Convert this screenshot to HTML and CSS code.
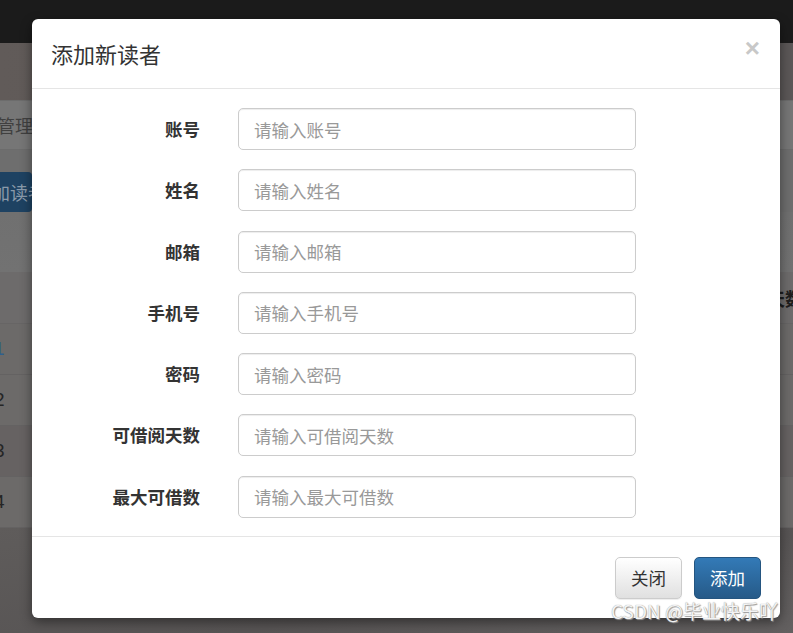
FILE: index.html
```html
<!DOCTYPE html>
<html lang="zh">
<head>
<meta charset="utf-8">
<title>添加新读者</title>
<link rel="stylesheet" href="styles.css">
</head>
<body>
<div class="page">
  <div class="topbar"></div>
  <div class="band band-dark"></div>
  <div class="band band-nav"><span class="nav-text">管理</span></div>
  <div class="band band-gap"></div>
  <div class="band band-btn"><span class="blue-btn">加读者</span></div>
  <div class="band band-light"></div>
  <div class="band band-head"><span class="head-right">天数</span></div>
  <div class="trow"><span class="num link">1</span></div>
  <div class="trow"><span class="num">2</span></div>
  <div class="trow trow-dark"><span class="num">3</span></div>
  <div class="trow"><span class="num">4</span></div>
  <div class="band band-bottom"></div>
</div>

<div class="modal">
  <div class="modal-header">
    <h4 class="modal-title">添加新读者</h4>
    <span class="close">&times;</span>
  </div>
  <form class="modal-body">
    <label class="form-label">账号</label><input class="form-input" placeholder="请输入账号">
    <label class="form-label">姓名</label><input class="form-input" placeholder="请输入姓名">
    <label class="form-label">邮箱</label><input class="form-input" placeholder="请输入邮箱">
    <label class="form-label">手机号</label><input class="form-input" placeholder="请输入手机号">
    <label class="form-label">密码</label><input class="form-input" placeholder="请输入密码">
    <label class="form-label">可借阅天数</label><input class="form-input" placeholder="请输入可借阅天数">
    <label class="form-label">最大可借数</label><input class="form-input" placeholder="请输入最大可借数">
  </form>
  <div class="modal-footer">
    <button class="btn btn-default" type="button">关闭</button>
    <button class="btn btn-primary" type="button">添加</button>
  </div>
</div>

<div class="watermark">CSDN @毕业快乐吖</div>
</body>
</html>
```

FILE: styles.css
```css
html, body {
  margin: 0;
  padding: 0;
  width: 793px;
  height: 633px;
  overflow: hidden;
  font-family: "Noto Sans CJK SC", "Liberation Sans", sans-serif;
  background: #5e5b5a;
}

.page {
  display: flex;
  flex-direction: column;
  width: 793px;
  height: 633px;
}

.topbar { height: 43px; background: #1b1b1b; flex: none; }
.band { flex: none; display: flex; align-items: center; }
.band-dark { height: 57px; background: linear-gradient(90deg, #615b59, #5a5655 60%, #5b5757); }
.band-nav { height: 50px; background: #767676; border-top: 1px solid #6c6c6c; border-bottom: 1px solid #6c6c6c; box-sizing: border-box; }
.nav-text { margin-left: -3px; font-size: 18px; color: #404040; line-height: 1; }
.band-gap { height: 22px; background: #6e6e6e; }
.band-btn { height: 40px; background: #6e6e6e; }
.blue-btn {
  display: flex; align-items: center;
  height: 40px; width: 40px; margin-left: -8px;
  background: #1e4262; color: #8a9aaa; font-size: 18px; white-space: nowrap; overflow: hidden;
  border-radius: 4px;
}
.band-light { height: 60px; background: linear-gradient(180deg, #707070, #727272); }
.band-head { height: 52px; background: #6d6b6b; justify-content: flex-end; border-bottom: 1px solid #676565; box-sizing: border-box; }
.head-right { font-size: 18px; font-weight: bold; color: #1d1d1d; margin-right: -10px; }

.trow {
  flex: none; height: 51px; display: flex; align-items: center;
  background: #6c6a69; border-bottom: 1px solid #646262; box-sizing: border-box;
}
.trow-dark { background: #666262; }
.num { font-size: 19px; color: #252525; margin-left: -6px; font-family: "Liberation Sans", sans-serif; }
.num.link { color: #2f5f8f; }
.band-bottom { flex: 1; background: linear-gradient(170deg, #5f5c5b, #575454 60%, #636060); }

/* Modal */
.modal {
  position: absolute;
  left: 32px;
  top: 19px;
  width: 748px;
  background: #fff;
  border-radius: 6px;
  box-shadow: 0 4px 12px rgba(0,0,0,0.45);
}

.modal-header {
  display: flex;
  align-items: center;
  justify-content: space-between;
  padding: 18px 19px 19px 19px;
  border-bottom: 1px solid #e5e5e5;
}
.modal-title {
  margin: 0;
  font-size: 22px;
  font-weight: normal;
  line-height: 32px;
  color: #333;
}
.close {
  font-family: "Liberation Sans", sans-serif;
  font-size: 26px;
  font-weight: bold;
  color: #c8c8c8;
  line-height: 1;
  margin-top: -10px;
  margin-right: 1px;
}

.modal-body {
  margin: 0;
  display: grid;
  grid-template-columns: 149px 398px;
  column-gap: 38px;
  row-gap: 19.3px;
  align-items: center;
  padding: 19px 19px 18px 19px;
  border-bottom: 1px solid #e5e5e5;
}
.form-label {
  text-align: right;
  font-size: 17.5px;
  font-weight: bold;
  color: #333;
  line-height: 24px;
}
.form-input {
  box-sizing: border-box;
  height: 42px;
  width: 398px;
  padding: 7px 15px;
  border: 1px solid #ccc;
  border-radius: 5px;
  font-size: 17.5px;
  font-family: "Noto Sans CJK SC", sans-serif;
  color: #555;
  box-shadow: inset 0 1px 1px rgba(0,0,0,0.075);
  outline: none;
}
.form-input::placeholder { color: #999; }

.modal-footer {
  display: flex;
  justify-content: flex-end;
  gap: 12px;
  padding: 20px 19px 19px 19px;
}
.btn {
  box-sizing: border-box;
  height: 42px;
  padding: 0 15px;
  font-size: 17.5px;
  font-family: "Noto Sans CJK SC", sans-serif;
  border-radius: 5px;
  line-height: 40px;
}
.btn-default {
  color: #333;
  background: linear-gradient(180deg, #fff 0%, #e0e0e0 100%);
  border: 1px solid #ccc;
  box-shadow: inset 0 1px 0 rgba(255,255,255,.15), 0 1px 1px rgba(0,0,0,.075);
}
.btn-primary {
  color: #fff;
  background: linear-gradient(180deg, #337ab7 0%, #265a88 100%);
  border: 1px solid #245580;
}

.watermark {
  position: absolute;
  right: 15px;
  top: 598px;
  font-size: 19px;
  color: #f4f4f4;
  font-family: "Noto Sans CJK SC", sans-serif;
  text-shadow: 0 0 1px #8a8a8a, 1px 1px 1px #999;
  line-height: 26px;
}
```
